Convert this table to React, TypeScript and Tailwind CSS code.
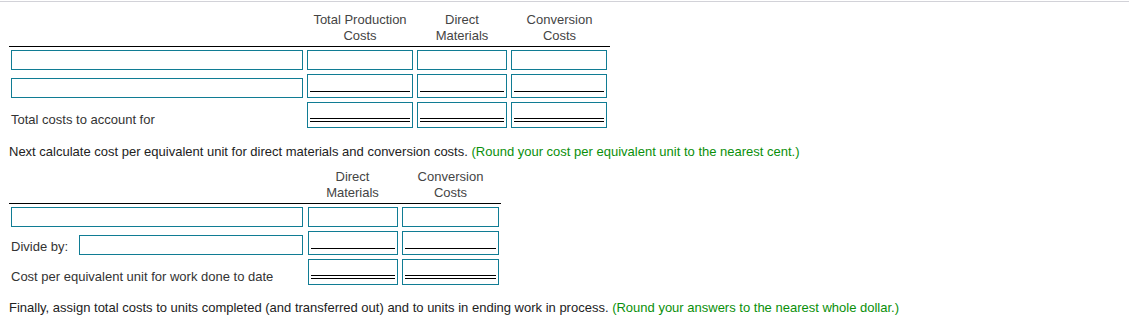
import React from "react";

const BOX = "border border-[#107c94] bg-white";

function Plain({ w, h = 20 }: { w: string; h?: number }) {
  return <div className={`${BOX} ${w}`} style={{ height: h }} />;
}

function Single({ w }: { w: string }) {
  return (
    <div className={`${BOX} ${w} h-[24px] px-[2px]`}>
      <div className="h-[17px] border-b border-black" />
    </div>
  );
}

function Double({ w }: { w: string }) {
  return (
    <div className={`${BOX} ${w} h-[26px] px-[2px]`}>
      <div className="h-[16px] border-b border-black" />
      <div className="h-[3px] border-b border-black" />
    </div>
  );
}

function Head({ a, b, w }: { a: string; b: string; w: string }) {
  return (
    <div className={`${w} flex flex-col items-center text-[13px] leading-[16px] text-[#444]`}>
      <span>{a}</span>
      <span>{b}</span>
    </div>
  );
}

export default function App() {
  return (
    <div className="w-[1129px] h-[325px] bg-white text-[13px] leading-[16px] text-[#333]" style={{ fontFamily: '"Liberation Sans", Arial, sans-serif' }}>
      <div className="mt-[1px] h-px bg-[#d2d2d8]" />

      {/* costs to account for */}
      <div className="ml-[9px] w-[601px]">
        <div className="flex pt-[10px] pb-[2px] border-b border-black">
          <div className="w-[296px]" />
          <Head a="Total Production" b="Costs" w="w-[110px]" />
          <Head a="Direct" b="Materials" w="w-[94px]" />
          <Head a="Conversion" b="Costs" w="w-[101px]" />
        </div>
        <div className="flex pt-[3px] pb-[2px]">
          <div className="w-[296px] px-[2px]"><Plain w="w-full" /></div>
          <div className="w-[110px] px-[2px]"><Plain w="w-full" /></div>
          <div className="w-[94px] px-[2px]"><Plain w="w-full" /></div>
          <div className="w-[101px] pl-[2px] pr-[3px]"><Plain w="w-full" /></div>
        </div>
        <div className="flex py-[2px]">
          <div className="w-[296px] px-[2px] flex items-end"><Plain w="w-full" /></div>
          <div className="w-[110px] px-[2px]"><Single w="w-full" /></div>
          <div className="w-[94px] px-[2px]"><Single w="w-full" /></div>
          <div className="w-[101px] pl-[2px] pr-[3px]"><Single w="w-full" /></div>
        </div>
        <div className="flex py-[2px]">
          <div className="w-[296px] px-[2px] flex items-end">Total costs to account for</div>
          <div className="w-[110px] px-[2px]"><Double w="w-full" /></div>
          <div className="w-[94px] px-[2px]"><Double w="w-full" /></div>
          <div className="w-[101px] pl-[2px] pr-[3px]"><Double w="w-full" /></div>
        </div>
      </div>

      <p className="mt-[14px] ml-[9px] text-[#222]">
        Next calculate cost per equivalent unit for direct materials and conversion costs.{" "}
        <span className="text-[#0a8f0a]">(Round your cost per equivalent unit to the nearest cent.)</span>
      </p>

      {/* cost per equivalent unit */}
      <div className="ml-[9px] w-[492px]">
        <div className="flex pt-[9px] pb-[2px] border-b border-black">
          <div className="w-[296px]" />
          <Head a="Direct" b="Materials" w="w-[95px]" />
          <Head a="Conversion" b="Costs" w="w-[101px]" />
        </div>
        <div className="flex pt-[3px] pb-[2px]">
          <div className="w-[296px] px-[2px]"><Plain w="w-full" /></div>
          <div className="w-[95px] pl-[3px] pr-[2px]"><Plain w="w-full" /></div>
          <div className="w-[101px] px-[2px]"><Plain w="w-full" /></div>
        </div>
        <div className="flex py-[2px]">
          <div className="w-[296px] px-[2px] flex items-end">
            <span className="w-[68px]">Divide by:</span>
            <Plain w="flex-1" />
          </div>
          <div className="w-[95px] pl-[3px] pr-[2px]"><Single w="w-full" /></div>
          <div className="w-[101px] px-[2px]"><Single w="w-full" /></div>
        </div>
        <div className="flex py-[2px]">
          <div className="w-[296px] px-[2px] flex items-end">Cost per equivalent unit for work done to date</div>
          <div className="w-[95px] pl-[3px] pr-[2px]"><Double w="w-full" /></div>
          <div className="w-[101px] px-[2px]"><Double w="w-full" /></div>
        </div>
      </div>

      <p className="mt-[13px] ml-[9px] text-[#222]">
        Finally, assign total costs to units completed (and transferred out) and to units in ending work in process.{" "}
        <span className="text-[#0a8f0a]">(Round your answers to the nearest whole dollar.)</span>
      </p>
    </div>
  );
}
